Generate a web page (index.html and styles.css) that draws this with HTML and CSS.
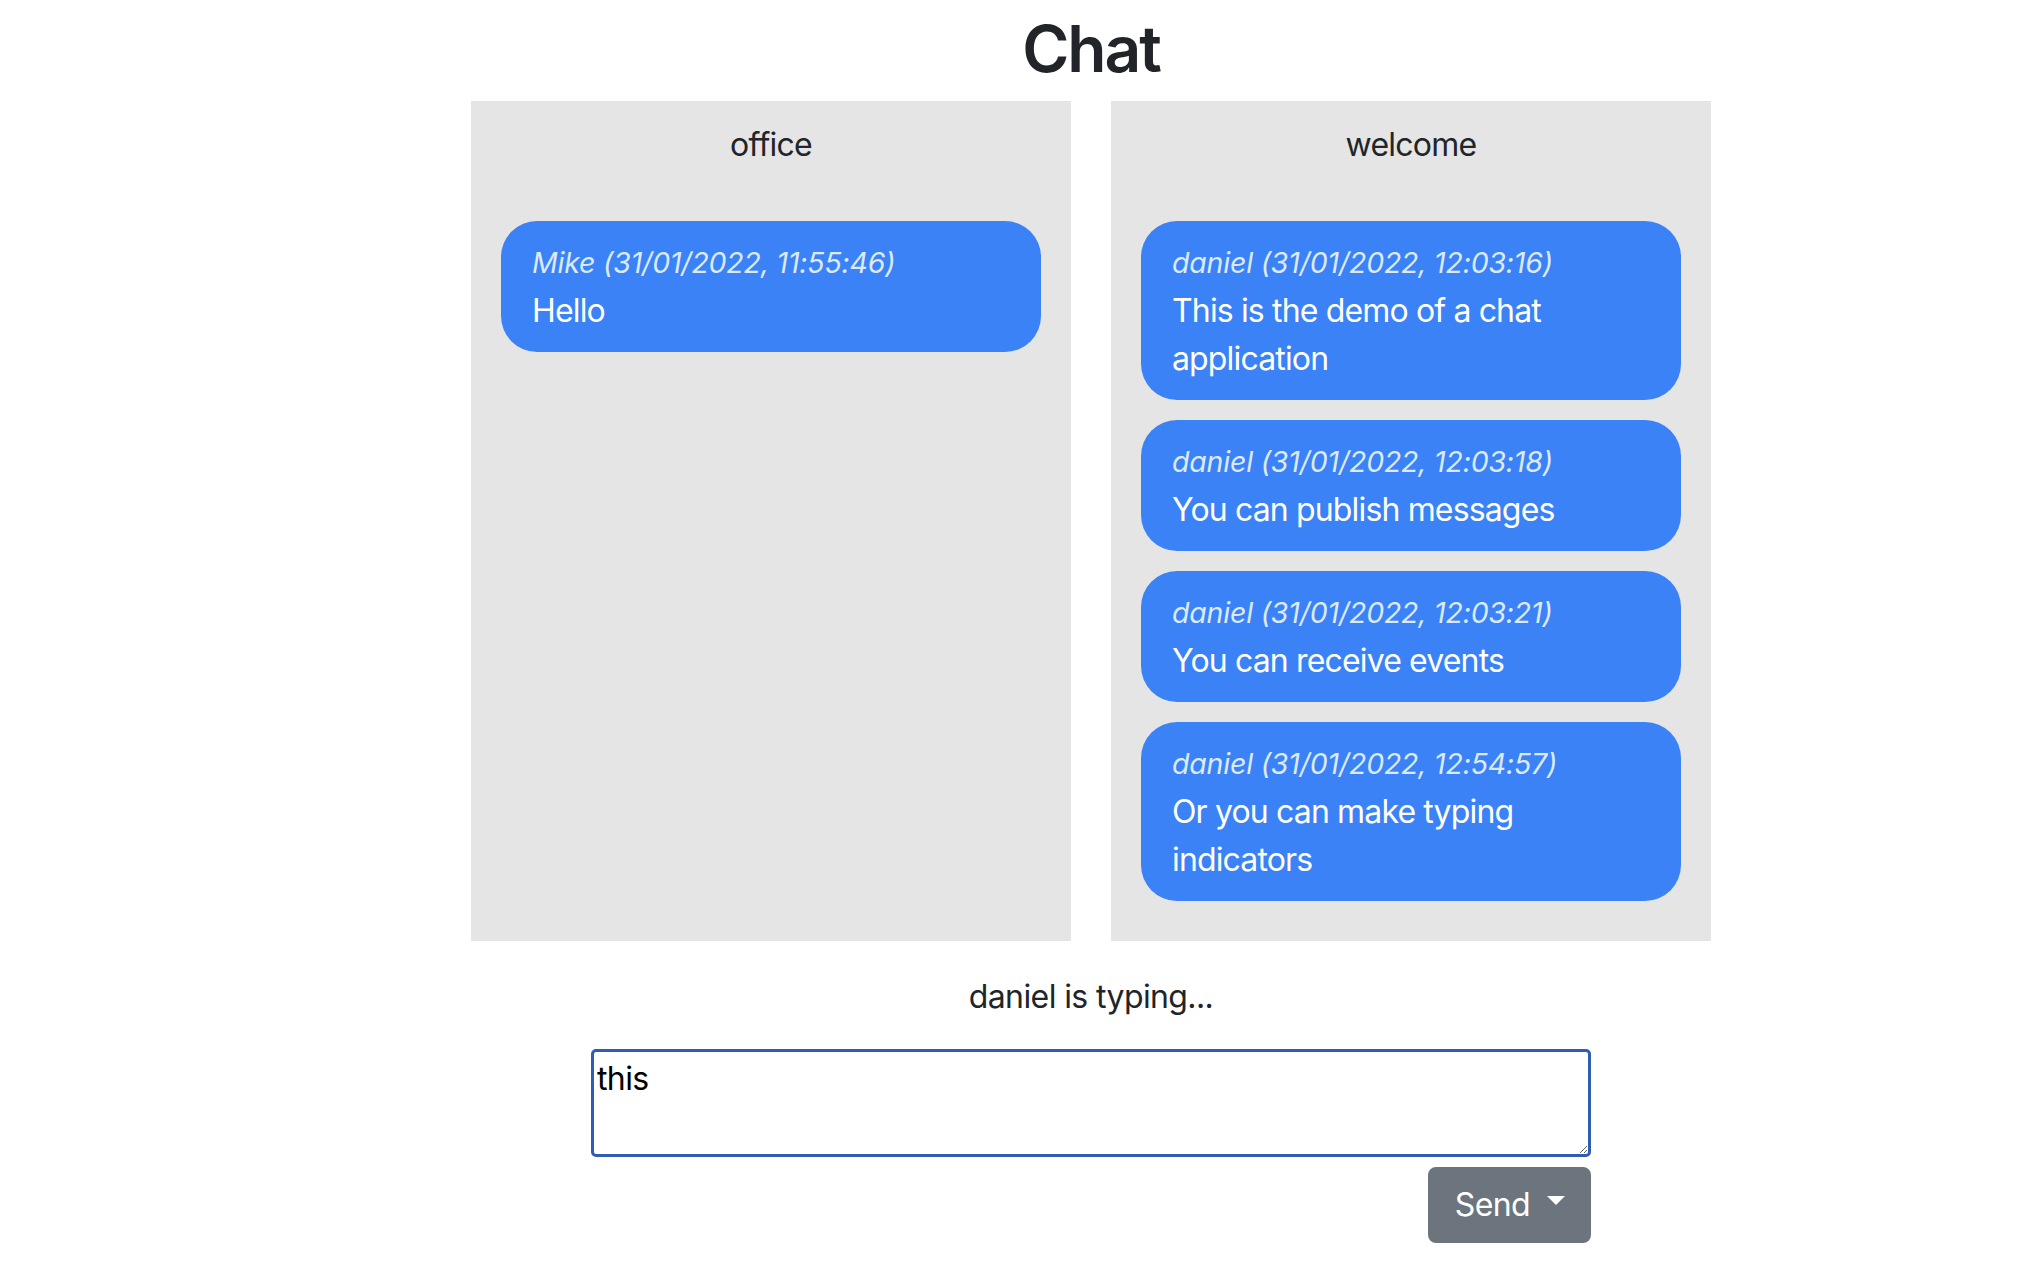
FILE: index.html
```html
<!DOCTYPE html>
<html lang="en">
<head>
<meta charset="utf-8">
<title>Chat</title>
<link rel="stylesheet" href="styles.css">
</head>
<body>
<main class="page">
  <h1 class="title">Chat</h1>
  <section class="rooms">
    <div class="room">
      <div class="room-name">office</div>
      <div class="messages">
        <div class="bubble">
          <div class="meta">Mike (31/01/2022, 11:55:46)</div>
          <div class="body">Hello</div>
        </div>
      </div>
    </div>
    <div class="room">
      <div class="room-name">welcome</div>
      <div class="messages">
        <div class="bubble">
          <div class="meta">daniel (31/01/2022, 12:03:16)</div>
          <div class="body">This is the demo of a chat application</div>
        </div>
        <div class="bubble">
          <div class="meta">daniel (31/01/2022, 12:03:18)</div>
          <div class="body">You can publish messages</div>
        </div>
        <div class="bubble">
          <div class="meta">daniel (31/01/2022, 12:03:21)</div>
          <div class="body">You can receive events</div>
        </div>
        <div class="bubble">
          <div class="meta">daniel (31/01/2022, 12:54:57)</div>
          <div class="body">Or you can make typing indicators</div>
        </div>
      </div>
    </div>
  </section>
  <p class="typing">daniel is typing...</p>
  <div class="composer">
    <textarea class="input">this</textarea>
    <div class="actions">
      <button class="send" type="button">Send<span class="caret"></span></button>
    </div>
  </div>
</main>
</body>
</html>
```
FILE: styles.css
```css
html, body {
  margin: 0;
  padding: 0;
  background: #ffffff;
}

body {
  font-family: "Inter", "Liberation Sans", sans-serif;
  font-size: 32px;
  line-height: 48px;
  letter-spacing: -0.75px;
  color: #212529;
}

.page {
  padding-left: 154px;
  display: flex;
  flex-direction: column;
  align-items: center;
}

.title {
  margin: 10px 0 14px;
  font-size: 64px;
  line-height: 77px;
  font-weight: 600;
  letter-spacing: -2px;
  color: #212529;
}

.rooms {
  display: flex;
  gap: 40px;
  width: 1240px;
}

.room {
  width: 600px;
  box-sizing: border-box;
  background: #e5e5e5;
  padding: 20px 30px 40px;
}

.room-name {
  text-align: center;
  margin-bottom: 52px;
}

.messages {
  display: flex;
  flex-direction: column;
  gap: 20px;
}

.bubble {
  background: #3b82f6;
  color: #ffffff;
  border-radius: 36px;
  padding: 20px 32px 17px 31px;
}

.meta {
  font-style: italic;
  font-size: 28.5px;
  line-height: 43px;
  margin-bottom: 3px;
  letter-spacing: -0.2px;
  color: #dbeafe;
}

.body {
  line-height: 48px;
  letter-spacing: -0.85px;
}

.typing {
  margin: 32px 0 28px;
  letter-spacing: -0.6px;
}

.composer {
  width: 1000px;
  display: flex;
  flex-direction: column;
  gap: 10px;
}

.input {
  box-sizing: border-box;
  width: 1000px;
  height: 108px;
  margin: 0;
  padding: 3px 3px;
  border: 3px solid #2f5db5;
  border-radius: 5px;
  outline: none;
  font-family: "Inter", "Liberation Sans", sans-serif;
  font-size: 32px;
  line-height: 48px;
  letter-spacing: -0.6px;
  color: #000000;
  background: #ffffff;
  resize: vertical;
}

.actions {
  display: flex;
  justify-content: flex-end;
}

.send {
  display: inline-flex;
  align-items: center;
  height: 76px;
  padding: 12px 24px 12px 25px;
  border: 2px solid #6c757d;
  border-radius: 8px;
  background: #6c757d;
  color: #ffffff;
  font-family: "Inter", "Liberation Sans", sans-serif;
  font-size: 32px;
  line-height: 48px;
  letter-spacing: -0.6px;
}

.caret {
  display: inline-block;
  width: 0;
  height: 0;
  margin-left: 17px;
  margin-bottom: 10px;
  border-top: 9px solid #ffffff;
  border-left: 9.5px solid transparent;
  border-right: 9.5px solid transparent;
}
```
